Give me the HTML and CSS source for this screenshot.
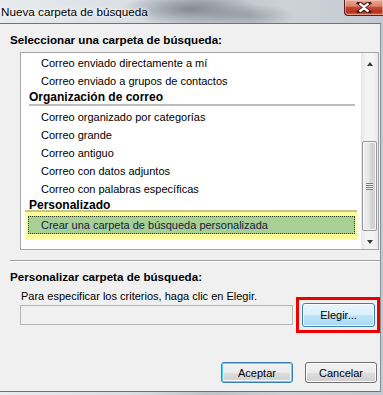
FILE: index.html
```html
<!DOCTYPE html>
<html>
<head>
<meta charset="UTF-8">
<title>Nueva carpeta de búsqueda</title>
<link rel="stylesheet" href="styles.css">
</head>
<body>

<div class="window">
	<div class="titlebar">
		<span class="title">Nueva carpeta de búsqueda</span>
		<span class="close">
			<svg width="16" height="11" viewBox="0 0 16 11">
				<path d="M3 1 L8 4.5 L13 1 M3 10 L8 6.5 L13 10" fill="none" stroke="#4a1c14" stroke-width="4.2" stroke-linecap="square"/>
				<path d="M3.5 1.5 L8 4.8 L12.5 1.5 M3.5 9.5 L8 6.2 L12.5 9.5" fill="none" stroke="#fff" stroke-width="2.2"/>
			</svg>
		</span>
	</div>

	<div class="client">
		<div class="label">Seleccionar una carpeta de búsqueda:</div>

		<div class="listbox">
			<div class="items">
				<div class="item">Correo enviado directamente a mí</div>
				<div class="item">Correo enviado a grupos de contactos</div>
				<div class="group">Organización de correo</div>
				<div class="item">Correo organizado por categorías</div>
				<div class="item">Correo grande</div>
				<div class="item">Correo antiguo</div>
				<div class="item">Correo con datos adjuntos</div>
				<div class="item">Correo con palabras específicas</div>
				<div class="group">Personalizado</div>
				<div class="mark">
					<div class="item selected">Crear una carpeta de búsqueda personalizada</div>
				</div>
			</div>
			<div class="scrollbar">
				<div class="arrow up"></div>
				<div class="track"><div class="thumb"><span class="grip"></span></div></div>
				<div class="arrow down"></div>
			</div>
		</div>

		<div class="divider"></div>

		<div class="label">Personalizar carpeta de búsqueda:</div>
		<p class="hint">Para especificar los criterios, haga clic en Elegir.</p>

		<div class="criteria">
			<div class="field"></div>
			<div class="callout">
				<button class="btn hot">Elegir...</button>
			</div>
		</div>

		<div class="actions">
			<button class="btn default">Aceptar</button>
			<button class="btn">Cancelar</button>
		</div>
	</div>
</div>

</body>
</html>
```

FILE: styles.css
```css
* {
	box-sizing: border-box;
	font-family: "Liberation Sans", Arial, sans-serif;
}

body {
	margin: 0;
	width: 383px;
	height: 395px;
	overflow: hidden;
}

.window {
	width: 383px;
	height: 395px;
	background:
		radial-gradient(ellipse 70px 16px at 190px 9px, rgba(80, 86, 96, .55), transparent),
		radial-gradient(ellipse 45px 12px at 250px 16px, rgba(110, 116, 126, .45), transparent),
		linear-gradient(to right, #e8ebee 0%, #d9dee3 35%, #bcc3cb 55%, #cdd2d8 75%, #c3cad2 100%);
}

.titlebar {
	height: 23px;
	display: flex;
	justify-content: space-between;
	align-items: flex-start;
}

.title {
	font-size: 11.7px;
	line-height: 24px;
	padding-left: 1px;
	color: #000;
	text-shadow: 0 0 6px #fff, 0 0 3px #fff;
}

.close {
	width: 39px;
	height: 16px;
	display: flex;
	align-items: center;
	justify-content: center;
	border: 1px solid #5a2118;
	border-top: 0;
	border-right: 0;
	border-radius: 0 0 0 4px;
	background: linear-gradient(#e9a593 0%, #d98672 40%, #c44a32 50%, #b53019 80%, #d8704f 100%);
	box-shadow: inset 0 0 0 1px rgba(255, 220, 210, .45);
}

.client {
	width: 381px;
	height: 369px;
	background: #f0f0f0;
	border-top: 1px solid #6f747b;
	border-right: 1px solid #8a9098;
	border-bottom: 1px solid #6f747b;
}

.label {
	font-size: 11.6px;
	font-weight: bold;
	line-height: 16px;
	margin: 8px 0 0 10px;
	color: #000;
}

.listbox {
	margin: 4px 0 0 20px;
	width: 359px;
	height: 198px;
	border: 1px solid #a5a5a5;
	background: #fff;
	display: flex;
	font-size: 11px;
}

.items {
	flex: 1;
	padding-top: 1px;
}

.item {
	height: 18px;
	line-height: 18px;
	padding-left: 20px;
	color: #000;
}

.group {
	font-size: 12px;
	font-weight: bold;
	line-height: 14px;
	height: 16px;
	margin: 0 6px 2px 8px;
	border-bottom: 2px solid #bdbdbd;
}

.mark {
	background: #ffff9a;
	margin: -6px 4px 0 4px;
	padding: 4px 2px 5px 3px;
	border-top: 2px solid #c9c48c;
}

.mark .item.selected {
	background: #a8cf96;
	border: 1px dotted #2d3a22;
	line-height: 16px;
	padding-left: 12px;
	color: #10233f;
}

.scrollbar {
	width: 17px;
	display: flex;
	flex-direction: column;
	background: linear-gradient(to right, #e6e6e6, #f4f4f4 30%, #f4f4f4 70%, #e9e9e9);
}

.arrow {
	height: 17px;
	display: flex;
	align-items: center;
	justify-content: center;
}

.arrow::before {
	content: "";
	border-left: 3px solid transparent;
	border-right: 3px solid transparent;
}

.arrow.up::before {
	border-bottom: 4px solid #3a3a3a;
	margin-top: 4px;
}

.arrow.down::before {
	border-top: 4px solid #3a3a3a;
	margin-top: 2px;
}

.track {
	flex: 1;
	display: flex;
	flex-direction: column;
	justify-content: flex-end;
	padding: 0 1px 1px 1px;
}

.thumb {
	height: 90px;
	border: 1px solid #979797;
	border-radius: 2px;
	background: linear-gradient(to right, #f1f1f1, #e4e4e4 50%, #d6d6d6 51%, #cfcfcf);
	box-shadow: inset 0 0 0 1px #fafafa;
	display: flex;
	align-items: center;
	justify-content: center;
}

.grip {
	width: 7px;
	height: 7px;
	background: repeating-linear-gradient(#7a7a7a 0 1px, #f2f2f2 1px 2px);
}

.divider {
	margin: 10px 0 0 10px;
	height: 1px;
	background: #a0a0a0;
	box-shadow: 0 1px 0 #fff;
}

.hint {
	margin: 4px 0 0 21px;
	font-size: 11px;
	line-height: 15px;
	color: #000;
}

.criteria {
	display: flex;
	align-items: center;
	margin: -7px 0 0 20px;
}

.field {
	width: 275px;
	height: 20px;
	border: 1px solid #b5b5b5;
	background: #f0f0f0;
}

/* red annotation box round the button */
.callout {
	margin-left: 3px;
	border: 3px solid #ee0000;
	padding: 3px 2px 3px 3px;
	display: flex;
}

.btn {
	height: 21px;
	width: 72px;
	font-size: 11px;
	color: #000;
	border: 1px solid #707070;
	border-radius: 3px;
	background: linear-gradient(#f2f2f2 0%, #ebebeb 50%, #dddddd 51%, #cfcfcf 100%);
	box-shadow: inset 0 0 0 1px #fcfcfc;
	padding: 0;
}

.btn.hot {
	width: 73px;
	height: 24px;
	border-color: #3c7fb1;
	background: linear-gradient(#eaf6fd 0%, #d9f0fc 50%, #bee6fd 51%, #a7d9f5 100%);
}

.actions {
	display: flex;
	justify-content: flex-end;
	gap: 12px;
	margin-top: 29px;
	padding-right: 3px;
}

.btn.default {
	border-color: #3c7fb1;
	box-shadow: inset 0 0 0 1px #48d8fb, inset 0 0 0 2px #f4fbfe;
}
```
